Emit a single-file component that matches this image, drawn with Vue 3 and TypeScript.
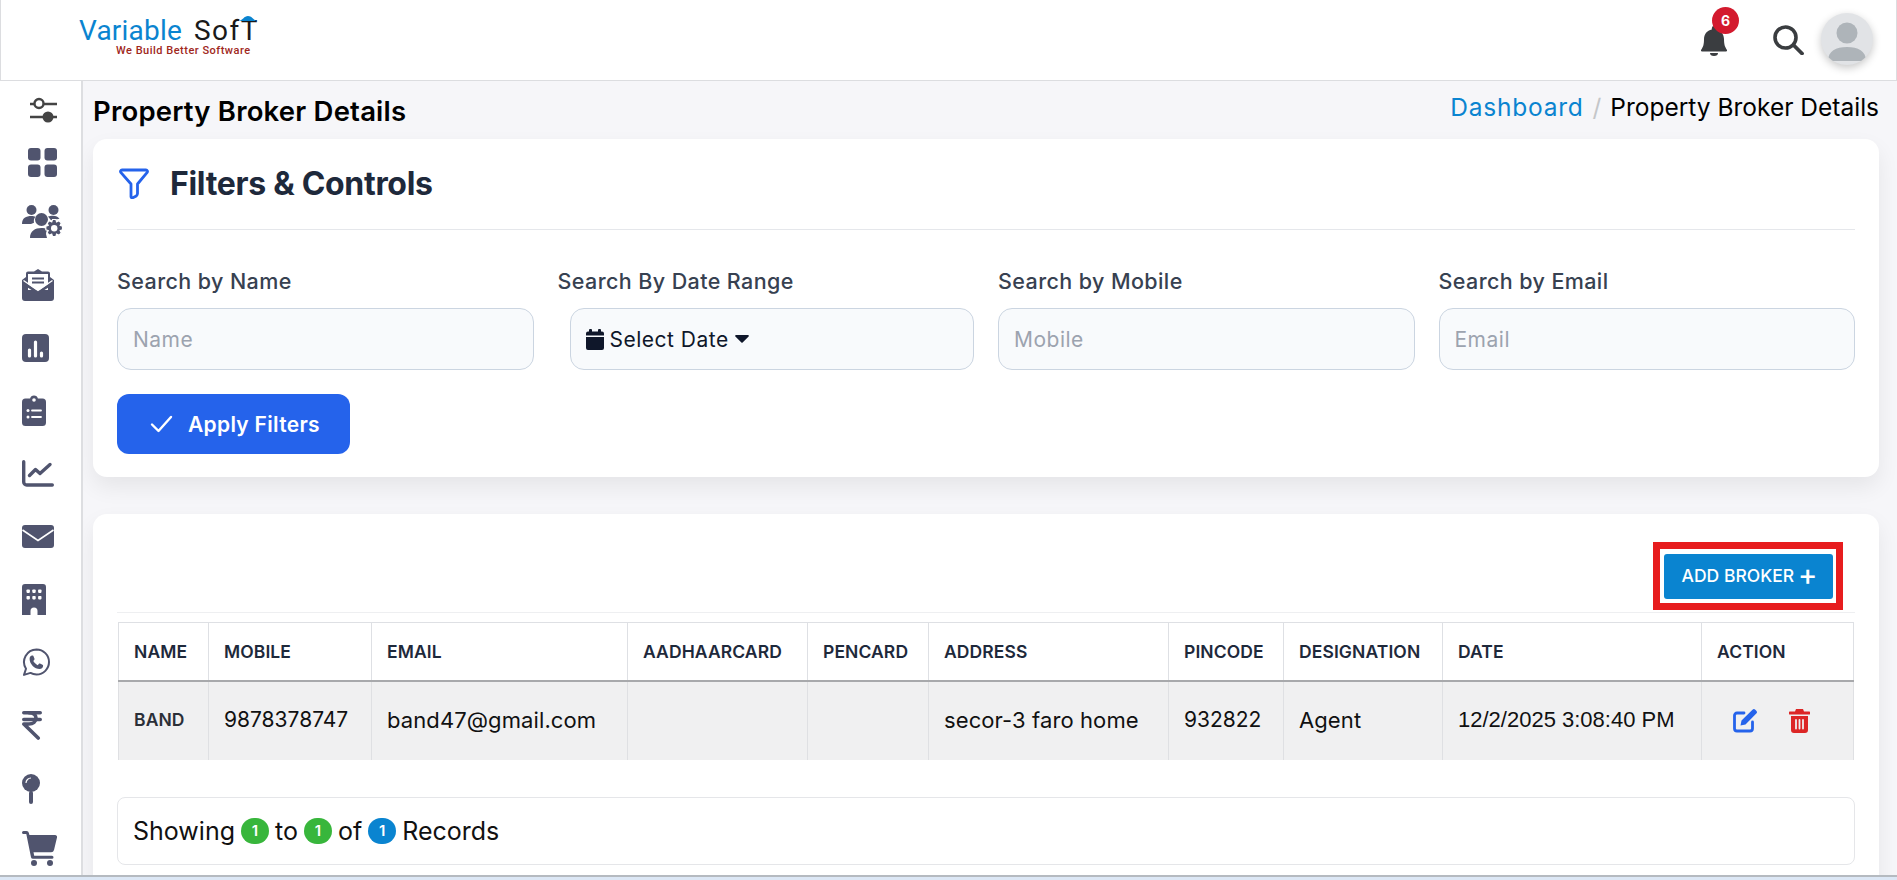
<script setup lang="ts">
const filters = [
  { label: 'Search by Name', placeholder: 'Name' },
  { label: 'Search By Date Range', placeholder: '' },
  { label: 'Search by Mobile', placeholder: 'Mobile' },
  { label: 'Search by Email', placeholder: 'Email' },
]
const columns = [
  { name: 'NAME', width: 90 },
  { name: 'MOBILE', width: 163 },
  { name: 'EMAIL', width: 256 },
  { name: 'AADHAARCARD', width: 180 },
  { name: 'PENCARD', width: 121 },
  { name: 'ADDRESS', width: 240 },
  { name: 'PINCODE', width: 115 },
  { name: 'DESIGNATION', width: 159 },
  { name: 'DATE', width: 259 },
  { name: 'ACTION', width: 152 },
]
</script>

<template>
  <div class="page">
    <header class="topbar">
      <div class="logo">
        <div class="logo-main"><span class="logo-blue">Variable</span><span class="logo-dark">SofT</span></div>
        <div class="logo-tag">We Build Better Software</div>
        <svg class="logo-hat" width="18" height="8" viewBox="0 0 18 8"><path d="M0 6C4 5 5 1 9 1s5 4 9 5z" fill="#0a84d0"/></svg>
      </div>
      <div class="top-actions">
        <div class="bell">
          <svg width="26" height="30" viewBox="0 0 26 30"><path fill="#3a3d40" d="M13 0a2.2 2.2 0 0 1 2.2 2.2v1.2C20 4.300 23 8.300 23 13c0 6 1 8 3 11 .4.800 0 1.500-1 1.500H1c-1 0-1.400-.7-1-1.500 2-3 3-5 3-11 0-4.700 3-8.700 7.800-9.600V2.200A2.200 2.200 0 0 1 13 0z"/><path fill="#3a3d40" d="M9 27h8a4 3 0 0 1-8 0z"/></svg>
          <span class="bell-badge">6</span>
        </div>
        <svg class="search-ico" width="31" height="30" viewBox="0 0 31 30"><circle cx="12.500" cy="12.500" r="10.500" fill="none" stroke="#3a3d40" stroke-width="3.600"/><path d="M20.500 20l8.500 8.500" stroke="#3a3d40" stroke-width="3.800" stroke-linecap="round"/></svg>
        <div class="avatar">
          <svg width="52" height="52" viewBox="0 0 52 52"><circle cx="26" cy="20" r="10.500" fill="#aeb4b9"/><path d="M7 48c0-10 8-14 19-14s19 4 19 14z" fill="#aeb4b9"/></svg>
        </div>
      </div>
    </header>

    <div class="body-row">
      <aside class="sidebar">
        <div class="side-row short ind8"><svg width="27" height="26" viewBox="0 0 27 26"><path d="M0 7h27M0 20h27" stroke="#444" stroke-width="2.400" stroke-linecap="round"/><circle cx="9" cy="6.500" r="4.500" fill="#fff" stroke="#444" stroke-width="2.400"/><circle cx="18" cy="20" r="5.500" fill="#444"/></svg></div>
        <div class="side-row short ind6"><svg width="29" height="29" viewBox="0 0 29 29" fill="#50546e"><rect width="12.500" height="12.500" rx="3"/><rect x="16.500" width="12.500" height="12.500" rx="3"/><rect y="16.500" width="12.500" height="12.500" rx="3"/><rect x="16.500" y="16.500" width="12.500" height="12.500" rx="3"/></svg></div>
        <div class="side-row"><svg width="41" height="33" viewBox="0 0 41 33" fill="#50546e"><circle cx="9.500" cy="5" r="5"/><circle cx="31.500" cy="5" r="5"/><path d="M0 19c0-6 4-8 9.500-8 1.500 0 3 .2 4 .7-1.500 1.500-2 3.500-1.500 6l-3 1.300z"/><path d="M26 11.500c1.500-.5 3-.7 5-.7 3 0 5 1 6.500 3l-5 1-3.500.5z"/><circle cx="19.500" cy="14.500" r="6.500"/><path d="M8 33c0-7 5-10 11.500-10 2 0 4 .3 5.500 1l-1 5 1 4z"/><path d="M30.500 14.500h3.400l.7 2.400 2.400-1.100 2.300 2.300-1.100 2.400 2.300.8v3.400l-2.300.8 1.100 2.400-2.300 2.300-2.400-1.100-.7 2.400h-3.400l-.8-2.400-2.300 1.100-2.300-2.300 1.100-2.400-2.400-.8v-3.400l2.400-.8-1.100-2.400 2.300-2.300 2.300 1.100z" stroke="#fff" stroke-width="1.200"/><circle cx="32.200" cy="23.300" r="3.200" fill="#fff"/></svg></div>
        <div class="side-row"><svg width="32" height="32" viewBox="0 0 32 32" fill="#50546e"><path d="M16 0l4 2.500h6a2 2 0 0 1 2 2V8l4 3v18a3 3 0 0 1-3 3H3a3 3 0 0 1-3-3V11l4-3V4.500a2 2 0 0 1 2-2h6z"/><rect x="6" y="5" width="20" height="16" fill="#fff"/><path d="M10 9.500h12M10 13.500h12" stroke="#50546e" stroke-width="1.800"/><path d="M0 11l16 11 16-11v4L16 25 0 15z" fill="#50546e"/><path d="M1.500 11.500L16 21.500l14.500-10" fill="none" stroke="#fff" stroke-width="1.400"/></svg></div>
        <div class="side-row"><svg width="27" height="28" viewBox="0 0 27 28"><rect width="27" height="28" rx="4" fill="#50546e"/><path d="M7.500 22v-6M13.500 22V8M19.500 22v-3" stroke="#fff" stroke-width="3.200" stroke-linecap="round"/></svg></div>
        <div class="side-row"><svg width="24" height="31" viewBox="0 0 24 31"><path fill="#50546e" d="M3.500 3.500h4.600a4 4 0 0 1 7.800 0h4.600A3.500 3.500 0 0 1 24 7v20.500a3.500 3.500 0 0 1-3.500 3.500h-17A3.500 3.500 0 0 1 0 27.500V7a3.500 3.500 0 0 1 3.500-3.500z"/><circle cx="12" cy="5" r="1.800" fill="#fff"/><circle cx="6" cy="15.500" r="1.500" fill="#fff"/><circle cx="6" cy="22" r="1.500" fill="#fff"/><path d="M10 15.500h9M10 22h9" stroke="#fff" stroke-width="1.800" stroke-linecap="round"/></svg></div>
        <div class="side-row"><svg width="32" height="27" viewBox="0 0 32 27" fill="none" stroke="#50546e" stroke-width="3.400" stroke-linecap="round" stroke-linejoin="round"><path d="M1.700 1.700V22a3 3 0 0 0 3 3h25.600"/><path d="M7.500 15.500l6-6 4.500 4 10-9"/></svg></div>
        <div class="side-row"><svg width="32" height="23" viewBox="0 0 32 23"><path fill="#50546e" d="M3 0h26a3 3 0 0 1 3 3v17a3 3 0 0 1-3 3H3a3 3 0 0 1-3-3V3a3 3 0 0 1 3-3z"/><path d="M.5 5L16 15.500 31.500 5" fill="none" stroke="#fff" stroke-width="1.600"/></svg></div>
        <div class="side-row"><svg width="24" height="31" viewBox="0 0 24 31"><path fill="#50546e" d="M3 0h18a3 3 0 0 1 3 3v28h-8.500v-4a3.500 3.500 0 0 0-7 0v4H0V3a3 3 0 0 1 3-3z"/><g fill="#fff"><rect x="4.500" y="5.500" width="3.400" height="3.400" rx=".8"/><rect x="10.300" y="5.500" width="3.400" height="3.400" rx=".8"/><rect x="16.100" y="5.500" width="3.400" height="3.400" rx=".8"/><rect x="4.500" y="12" width="3.400" height="3.400" rx=".8"/><rect x="10.300" y="12" width="3.400" height="3.400" rx=".8"/><rect x="16.100" y="12" width="3.400" height="3.400" rx=".8"/></g></svg></div>
        <div class="side-row"><svg width="28" height="29" viewBox="0 0 28 29"><path fill="none" stroke="#50546e" stroke-width="2" stroke-linejoin="round" d="M14.500 1.500a12.500 12.500 0 0 1 0 25c-2.300 0-4.300-.6-6-1.600l-6.500 2 2-6.200A12.500 12.500 0 0 1 14.500 1.500z"/><path fill="#50546e" d="M10.200 7.500c.5 0 1 0 1.300.8l1 2.500c.1.400 0 .7-.2 1l-1 1.200c1 1.800 2.400 3.100 4.400 4.200l1.300-1.400c.3-.3.600-.4 1-.2l2.500 1.200c.5.300.7.600.6 1.100-.2 1.700-1.600 3-3.500 3-5 0-10-5-10-10 0-1.800 1-3.300 2.600-3.400z"/></svg></div>
        <div class="side-row"><svg width="20" height="29" viewBox="0 0 20 29" fill="none" stroke="#50546e" stroke-width="3.600" stroke-linecap="round" stroke-linejoin="round"><path d="M1.800 1.800h16.400M1.800 8.500h16.400"/><path d="M7 1.800c5 0 7 2.700 7 5.200 0 3.500-3 6-7 6H1.800l14.400 14"/></svg></div>
        <div class="side-row"><svg width="18" height="30" viewBox="0 0 18 30" fill="#50546e"><circle cx="9" cy="9" r="9"/><rect x="7" y="17" width="4" height="13" rx="2"/><path d="M4 9a5 5 0 0 1 5-5" fill="none" stroke="#fff" stroke-width="1.200"/></svg></div>
        <div class="side-row last"><svg width="35" height="35" viewBox="0 0 35 35" fill="#50546e"><path d="M1.500 0h3a2.500 2.500 0 0 1 2.400 2L7.400 4H33a2 2 0 0 1 2 2.500l-3 12.500a3 3 0 0 1-3 2.300H11.500l.7 3.500H30a1.500 1.500 0 0 1 0 3H11a2 2 0 0 1-2-1.600L4.300 3H1.500a1.500 1.500 0 0 1 0-3z"/><circle cx="12" cy="32" r="3"/><circle cx="28" cy="32" r="3"/></svg></div>
      </aside>

      <main class="content">
        <div class="title-row">
          <h1 class="page-title">Property Broker Details</h1>
          <nav class="crumbs"><a class="crumb-link">Dashboard</a><span class="crumb-sep">/</span><span class="crumb-cur">Property Broker Details</span></nav>
        </div>

        <section class="card filter-card">
          <div class="card-head">
            <svg width="30" height="31" viewBox="0 0 30 31"><path fill="none" stroke="#2563eb" stroke-width="2.800" stroke-linejoin="round" d="M3 2h24a1.500 1.500 0 0 1 1.200 2.400L18.500 16v9.500c0 1-.4 1.700-1.200 2.400l-3.500 1.800c-.9.400-1.800 0-1.800-1V16L1.800 4.400A1.500 1.500 0 0 1 3 2z"/></svg>
            <h2 class="card-title">Filters &amp; Controls</h2>
          </div>
          <div class="filter-grid">
            <div v-for="(f, i) in filters" :key="f.label" class="field">
              <label class="field-label">{{ f.label }}</label>
              <div v-if="i === 1" class="input date-input">
                <svg width="18" height="21" viewBox="0 0 18 21" fill="#0f172a"><rect x="3" width="3" height="4" rx="1"/><rect x="12" width="3" height="4" rx="1"/><path d="M2 2.500h14a2 2 0 0 1 2 2v2H0v-2a2 2 0 0 1 2-2zM0 8h18v11a2 2 0 0 1-2 2H2a2 2 0 0 1-2-2z"/></svg>
                <span class="date-text">Select Date</span>
                <svg width="14" height="8" viewBox="0 0 14 8"><path d="M1 0h12c.8 0 1.200 1 .6 1.600L7.600 7.500a.9.900 0 0 1-1.200 0L.4 1.600C-.2 1 .2 0 1 0z" fill="#0f172a"/></svg>
              </div>
              <div v-else class="input"><span class="placeholder">{{ f.placeholder }}</span></div>
            </div>
          </div>
          <button class="apply-btn">
            <svg width="23" height="18" viewBox="0 0 23 18"><path d="M2 9.500l6.500 6.500L21 2" fill="none" stroke="#fff" stroke-width="2.400" stroke-linecap="round" stroke-linejoin="round"/></svg>
            Apply Filters
          </button>
        </section>

        <section class="card table-card">
          <div class="toolbar">
            <div class="highlight"><button class="add-btn">ADD BROKER <span class="plus">+</span></button></div>
          </div>
          <table class="grid">
            <colgroup><col v-for="c in columns" :key="c.name" :style="{ width: c.width + 'px' }" /></colgroup>
            <thead>
              <tr><th v-for="c in columns" :key="c.name">{{ c.name }}</th></tr>
            </thead>
            <tbody>
              <tr>
                <td class="name-cell">BAND</td>
                <td class="num-cell">9878378747</td>
                <td>band47@gmail.com</td>
                <td></td>
                <td></td>
                <td>secor-3 faro home</td>
                <td class="num-cell">932822</td>
                <td>Agent</td>
                <td class="date-cell">12/2/2025 3:08:40 PM</td>
                <td class="action-cell">
                  <svg width="24" height="24" viewBox="0 0 24 24"><path fill="none" stroke="#2563eb" stroke-width="2.800" stroke-linecap="round" stroke-linejoin="round" d="M11 4H4a2.500 2.500 0 0 0-2.500 2.500v13A2.500 2.500 0 0 0 4 22h13a2.500 2.500 0 0 0 2.500-2.500V13"/><path fill="#2563eb" d="M19.500.800a2 2 0 0 1 2.800 0l1 1a2 2 0 0 1 0 2.800L12.500 15.500l-5 1 1-5z"/></svg>
                  <svg width="21" height="24" viewBox="0 0 21 24"><path fill="#dc2626" d="M7 0h7l1 2.500h5a1 1 0 0 1 0 3H1a1 1 0 0 1 0-3h5zM2 7h17v14a3 3 0 0 1-3 3H5a3 3 0 0 1-3-3z"/><path d="M7 11v8.500M10.500 11v8.500M14 11v8.500" stroke="#efeff0" stroke-width="1.800" stroke-linecap="round"/></svg>
                </td>
              </tr>
            </tbody>
          </table>
          <div class="records">
            <span>Showing</span><span class="pill green">1</span><span>to</span><span class="pill green">1</span><span>of</span><span class="pill blue">1</span><span>Records</span>
          </div>
        </section>
      </main>
    </div>
    <div class="taskbar"></div>
  </div>
</template>

<style>
html, body { margin: 0; overflow: hidden; }
</style>

<style scoped>
* { box-sizing: border-box; }
.page { width: 1897px; height: 880px; display: flex; flex-direction: column; overflow: hidden; font-family: Inter, "Open Sans", sans-serif; background: #f6f6f9; color: #000; }
.topbar { height: 81px; flex: none; background: #fff; border: 1px solid #dcdde0; border-top: 0; display: flex; align-items: center; justify-content: space-between; padding: 0 23px 0 78px; }
.logo { position: relative; width: 180px; height: 44px; margin-bottom: 4px; }
.logo-main { display: flex; font-family: Roboto, sans-serif; font-size: 28px; line-height: 30px; letter-spacing: .2px; }
.logo-blue { color: #0a84d0; width: 117px; }
.logo-dark { color: #1a1a1a; letter-spacing: 1.500px; }
.logo-tag { position: absolute; left: 37px; top: 28px; font-family: Roboto, sans-serif; font-size: 11px; line-height: 13px; letter-spacing: .5px; color: #a0281c; font-weight: 500; white-space: nowrap; }
.logo-hat { position: absolute; left: 160px; top: -1px; }
.top-actions { display: flex; align-items: center; }
.bell { position: relative; width: 26px; height: 30px; margin-right: 46px; margin-top: 1px; }
.bell-badge { position: absolute; left: 11px; top: -19px; width: 27px; height: 27px; border-radius: 50%; background: #d31a2e; color: #fff; font-size: 14px; font-weight: 700; display: flex; align-items: center; justify-content: center; }
.search-ico { margin-right: 17px; margin-top: -1px; }
.avatar { width: 52px; height: 52px; border-radius: 50%; background: #e1e3e6; overflow: hidden; box-shadow: 0 3px 8px rgba(0,0,0,.22); margin-top: -3px; }
.avatar svg { display: block; }
.body-row { flex: 1; min-height: 0; display: flex; }
.sidebar { width: 83px; flex: none; background: #fff; border-right: 2px solid #dddee1; padding: 4px 0 0 22px; overflow: hidden; }
.side-row { height: 63px; display: flex; align-items: center; }
.side-row.short { height: 50px; }
.side-row.short + .side-row.short { height: 55px; }
.side-row.ind8 { padding-left: 8px; }
.side-row.ind6 { padding-left: 6px; }
.side-row.last { height: 56px; }
.side-row svg { display: block; }
.content { flex: 1; min-width: 0; padding: 0 18px 0 10px; overflow: hidden; }
.title-row { height: 58px; display: flex; justify-content: space-between; align-items: flex-start; }
.page-title { margin: 15px 0 0; font-size: 27.500px; line-height: 30px; font-weight: 600; color: #000; letter-spacing: .2px; }
.crumbs { margin-top: 10px; font-size: 24.500px; line-height: 32px; display: flex; }
.crumb-link { color: #0a84d0; letter-spacing: .75px; }
.crumb-sep { color: #c4c6c9; margin: 0 9px; }
.crumb-cur { color: #000; }
.card { background: #fff; border-radius: 14px; box-shadow: 0 10px 22px rgba(0,0,0,.07); }
.filter-card { height: 338px; padding: 0 24px; }
.card-head { height: 91px; border-bottom: 1px solid #e5e7eb; display: flex; align-items: center; gap: 21px; padding: 0 0 1px 2px; }
.card-title { margin: 0; font-size: 32px; line-height: 36px; font-weight: 700; color: #1e293b; letter-spacing: -.3px; }
.filter-grid { display: grid; grid-template-columns: repeat(4, 1fr); gap: 24px; padding-top: 36px; }
.field-label { display: block; font-size: 21.500px; line-height: 30px; font-weight: 500; color: #374151; margin-bottom: 12px; letter-spacing: .4px; }
.input { height: 62px; background: #f8fafc; border: 1px solid #cbd5e1; border-radius: 14px; padding: 0 15px; display: flex; align-items: center; font-size: 21px; letter-spacing: .5px; }
.placeholder { color: #9ca3af; }
.date-input { margin-left: 12px; gap: 6px; padding: 0 15px; color: #0f172a; }
.apply-btn { margin-top: 24px; width: 233px; height: 60px; border: 0; border-radius: 12px; background: #2563eb; color: #fff; font: 600 21px/1 Inter, sans-serif; letter-spacing: .3px; display: flex; align-items: center; gap: 15px; padding: 0 0 0 33px; }
.table-card { margin-top: 37px; height: 400px; padding: 0 24px; }
.toolbar { height: 99px; border-bottom: 1px solid #eeeff1; display: flex; justify-content: flex-end; align-items: flex-start; padding: 28px 12px 0 0; margin: 0 0 9px 0; }
.highlight { width: 190px; height: 68px; border: 7px solid #e71c1e; display: flex; align-items: center; justify-content: center; }
.add-btn { width: 169px; height: 45px; border: 0; border-radius: 3px; background: #0a84d0; color: #fff; font: 500 17.500px/1 Inter, sans-serif; display: flex; align-items: center; justify-content: center; gap: 4px; padding: 0 0 0 3px; white-space: nowrap; }
.plus { font-size: 29px; line-height: 20px; font-weight: 500; margin-top: -3px; }
.grid { width: 1735px; margin-left: 1px; table-layout: fixed; border-collapse: collapse; }
.grid th { height: 58px; text-align: left; padding: 0 0 0 15px; font-size: 17.500px; letter-spacing: .1px; font-weight: 600; color: #1e293b; border: 1px solid #dee0e4; border-bottom: 2px solid #a8a9ac; white-space: nowrap; }
.grid td { height: 79px; padding: 0 0 2px 15px; background: #f0f0f1; font-size: 22px; letter-spacing: .1px; color: #111; border-left: 1px solid #dfe0e3; border-right: 1px solid #dfe0e3; white-space: nowrap; }
.grid td.name-cell { font-size: 17.500px; font-weight: 600; color: #2b2f38; }
.grid td.num-cell { font-size: 21px; letter-spacing: 0; }
.grid td.date-cell { font-size: 22px; letter-spacing: 0; font-family: "Liberation Sans", Arial, sans-serif; }
.action-cell svg { vertical-align: middle; margin-left: 16px; }
.action-cell svg + svg { margin-left: 32px; }
.records { margin-top: 37px; width: 1738px; height: 68px; border: 1px solid #e5e6e9; border-radius: 8px; padding: 0 15px; display: flex; align-items: center; gap: 6px; font-size: 25px; color: #111; }
.pill { width: 28px; height: 26px; border-radius: 14px; color: #fff; font-size: 15px; font-weight: 600; display: inline-flex; align-items: center; justify-content: center; }
.green { background: #38b63c; }
.blue { background: #0a84d0; }
.taskbar { height: 5px; flex: none; border-top: 2px solid #b5bac0; background: #dce7f5; }
</style>
